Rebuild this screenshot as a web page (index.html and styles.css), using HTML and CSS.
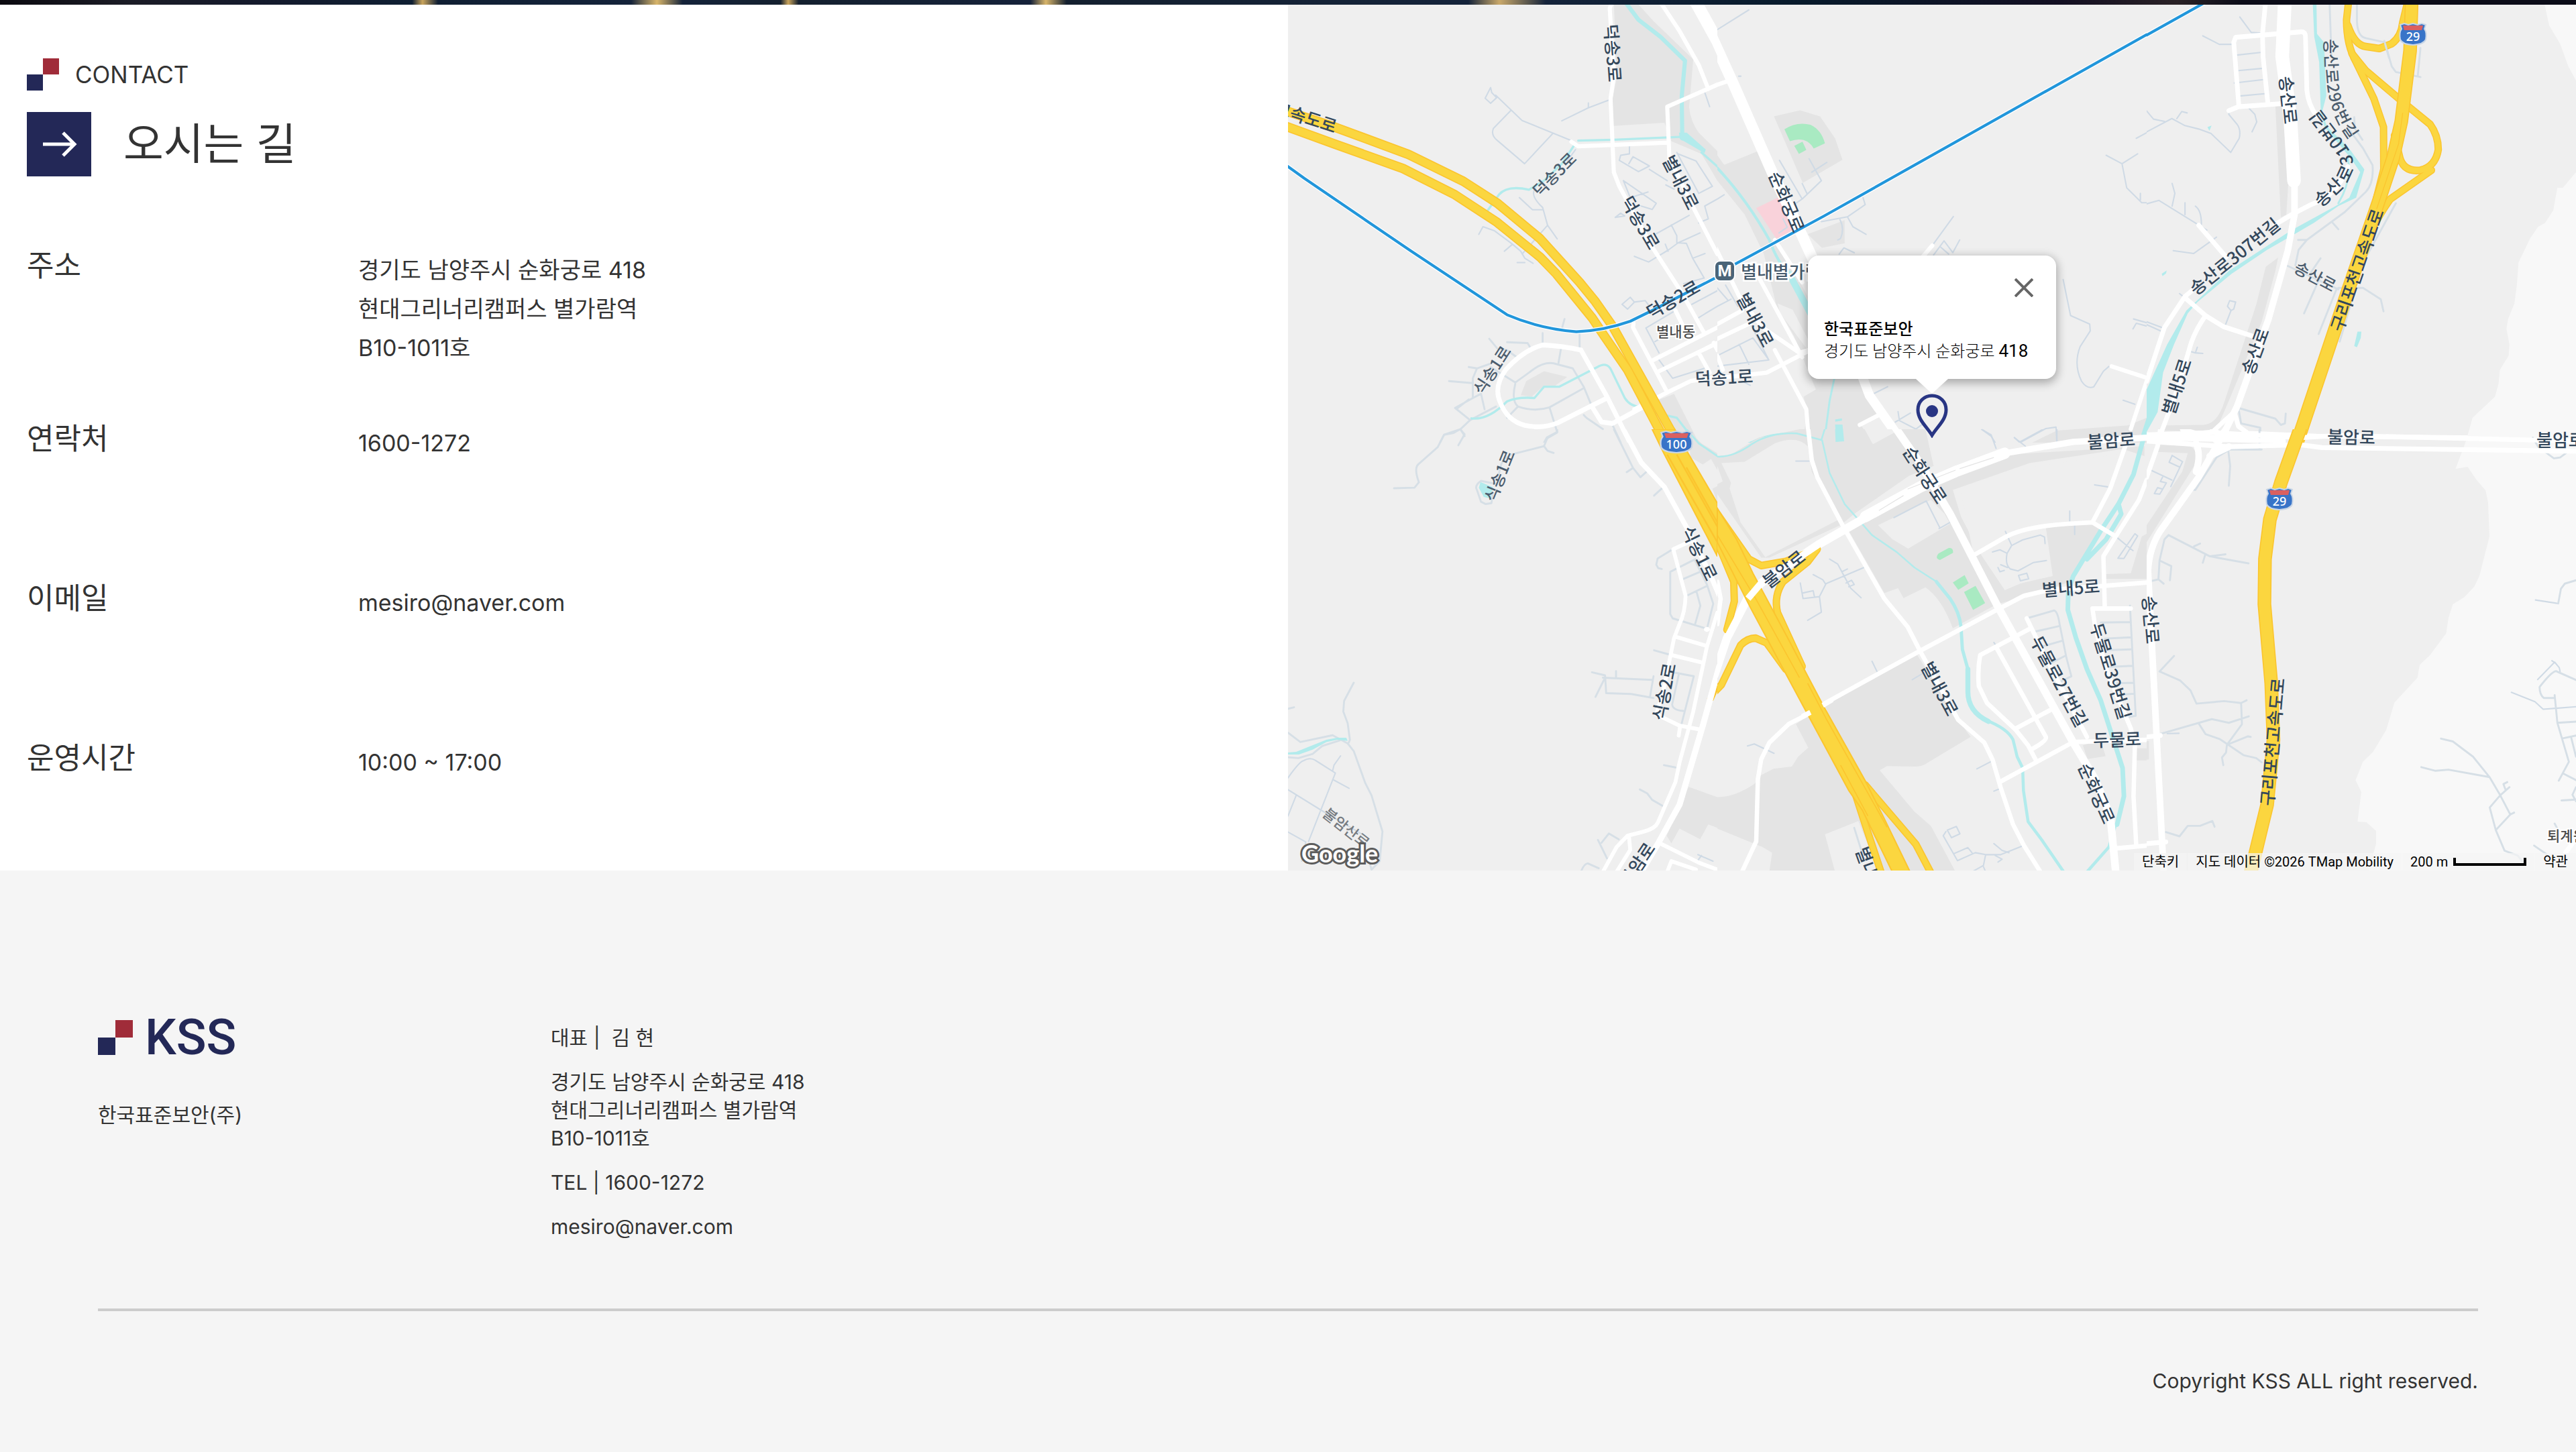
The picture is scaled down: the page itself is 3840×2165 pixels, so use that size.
FILE: index.html
```html
<!DOCTYPE html>
<html lang="ko">
<head>
<meta charset="utf-8">
<title>KSS 한국표준보안 - 오시는 길</title>
<link rel="stylesheet" href="styles.css">
</head>
<body>
<div class="hero-edge"></div>
<main class="contact">
  <section class="info">
    <div class="eyebrow">
      <svg class="mark" viewBox="0 0 48 48" aria-hidden="true"><path fill="#a02c39" d="M24 0h24v24H24z"/><path fill="#232857" d="M0 24h24v24H0z"/></svg>
      <span>CONTACT</span>
    </div>
    <div class="title">
      <span class="arrow"><svg viewBox="0 0 96 96" aria-hidden="true"><path d="M24 48h46M54 31l17 17-17 17" fill="none" stroke="#fff" stroke-width="5"/></svg></span>
      <h1>오시는 길</h1>
    </div>
    <dl class="rows">
      <div class="row"><dt>주소</dt><dd>경기도 남양주시 순화궁로 418<br>현대그리너리캠퍼스 별가람역<br>B10-1011호</dd></div>
      <div class="row"><dt>연락처</dt><dd>1600-1272</dd></div>
      <div class="row"><dt>이메일</dt><dd>mesiro@naver.com</dd></div>
      <div class="row"><dt>운영시간</dt><dd>10:00 ~ 17:00</dd></div>
    </dl>
  </section>

  <section class="map" aria-label="지도">
    <svg class="canvas" viewBox="0 0 1920 1291" preserveAspectRatio="xMidYMid slice">
      <defs>
        <g id="hw-a"><path d="M-40 382L0 395 170 450 440 547 640 642 765 720 920 845 1065 1000 1120 1065 1185 1155 1395 1520 1440 1590"/><path d="M-40 438L0 450 170 510 420 597 610 690 760 785 920 910 980 970 1110 1125 1155 1190 1240 1310 1300 1420 1360 1530 1400 1600"/></g>
        <g id="ramp-c"><path d="M738 0L730 70Q730 160 765 220L830 350 865 450 866 600 840 700"/><path d="M735 90Q760 160 800 165L850 172 895 155Q930 130 935 80L955 0"/><path d="M750 190L800 250 940 365 1035 440Q1065 480 1065 530 1055 590 1000 603 940 610 925 560L905 480"/><path d="M1040 603L890 705Q850 760 830 800"/></g>
        <path id="hw-c" d="M968 0L962 180 930 430 900 560 845 720 735 1030 690 1160 545 1580"/>
        <g id="ramp-e"><path d="M0 400L60 540 62 610 35 710"/><path d="M-20 940L15 905 85 765Q110 740 140 740L180 757 250 850"/><path d="M0 300L115 460 160 483 250 468 340 435"/><path d="M365 425L330 470 240 540Q205 590 220 650L310 840"/><path d="M500 1280L540 1400 605 1590"/><path d="M540 1260L725 1470 790 1590"/></g>
        <path id="hw-e" d="M0 280L70 390 130 510 260 745 390 985 540 1245 610 1380 715 1590H650L530 1350 480 1280 330 1010 230 830 120 630 0 400z"/>
        <path id="hw-f" d="M560 0L490 190 450 320 432 460 430 620 455 900 463 1100 440 1330 375 1590"/>
        <g id="shield"><path d="M-19 -15l6-2 6 2 7-2 7 2 6-2 6 2-2 6q4 6 2 16-3 7-19 8-16-1-19-8-2-10 2-16z" fill="#3874c8" stroke="#c9d6e6" stroke-width="2"/><path d="M-15-14H15l-2 7h-26z" fill="#da6060"/></g>
      </defs>

      <!-- tile 0,0 -->
      <svg class="tile" x="0" y="-7" width="640" height="660" viewBox="0 0 1568 1568" preserveAspectRatio="none">
        <path class="land" d="M1190 0H1265L1335 75 1480 210 1465 380Q1470 430 1500 470L1568 535V640L1510 545 1400 500 1375 435 1188 446 1185 350 1200 280z"/>
        <path class="land" d="M850 1400L870 1350 935 1315 1020 1335 970 1370 930 1370 890 1405zM1345 1420L1410 1395 1500 1568H1440z"/>
        <path class="minor" d="M740 310l-20 38 20 18 22-20-18-18zM758 337L855 427 1040 500M815 390L750 455Q740 480 765 498L864 580 965 475M1000 428L1097 382 1170 355M1097 382V365M1050 530L1020 570M905 665Q880 690 930 735L948 798 983 846M948 798L855 900M930 743H893L845 700M697 830L712 803 755 818 820 865 850 890 865 915 895 933M820 865L790 890M865 930H837M1247 520V545L1215 550 1210 568 1280 608 1320 588 1260 555 1245 580M1320 600L1385 640M1380 655L1410 670M1225 640L1250 700 1315 680M1225 640L1345 720 1330 742 1290 730M1195 770L1215 755 1230 765zM1420 540L1500 685 1550 660 1490 570 1425 545M1568 705L1522 730 1535 775 1500 790M1345 828L1465 763M1265 908L1317 928 1390 885 1425 860 1455 862 1478 915 1520 985M1400 797L1420 835V860M1425 860L1505 825M1378 865L1388 890M1478 915L1523 898M1520 985L1445 1005M1568 1030L1475 1078M1568 1085L1500 1125M1415 1100L1307 1162 1355 1250M1340 1210L1395 1180M1355 1275L1405 1340 1520 1305M1220 1078L1250 1053 1265 1070 1240 1095zM1265 1070L1305 1065 1320 1085M1523 330L1540 378"/>
        <path class="minor wide" d="M588 1350L675 1357M660 1300L690 1305 740 1288M735 1200L765 1235 800 1240 835 1265M800 1212L875 1215 890 1240M1010 1130L1000 1165M930 1215V1180M1065 1235V1185M997 1235L988 1285M690 1305L675 1340V1410L610 1445 665 1488 760 1440M675 1410L705 1395 718 1450M620 1445L660 1415M740 1300L830 1355 880 1320Q930 1280 970 1287L1040 1305 1080 1370 1110 1440M830 1360Q815 1420 840 1440 900 1460 955 1443L1080 1375M840 1440L800 1480M955 1443L983 1530 945 1550 935 1568M665 1488L630 1520 570 1540 555 1568M630 1520L645 1545M1080 1470L1090 1480 1150 1520M1185 1505L1215 1568"/>
        <path class="water" stroke-width="15" d="M1230 5L1280 70 1360 130 1450 215 1438 340 1440 490"/>
        <path class="water" stroke-width="8" d="M1060 498L1190 495 1430 485M1045 515L1000 580 935 640 880 672Q800 655 770 690L730 745M1510 540L1568 590M670 1482Q730 1490 800 1422 840 1405 900 1410L935 1370H990L1130 1300Q1165 1280 1180 1310L1230 1410Q1250 1440 1285 1440M1330 1460L1420 1480 1490 1568"/>
        <path class="water-fill" d="M1428 470h28l70 60-5 12-90-50z"/>
        <path class="road" stroke-width="15" d="M1185 0L1175 30 1190 270 1178 350 1190 610 1210 660 1330 875 1440 1040 1520 1180M1365 15L1430 110 1500 230 1535 315M1568 300L1385 378 1393 560 1470 715 1568 900M1388 505L1060 518 1035 502M1262 1145L1260 1160 1385 1390M1335 1275L1568 1160M1355 1315L1568 1215M1415 1100L1455 1180M1500 1250L1540 1320M1555 1215L1568 1240M1265 1450L1385 1390 1470 1350 1568 1335"/>
        <path class="road" stroke-width="17" d="M1070 1240L1165 1405 1255 1580M1070 1240Q1000 1225 930 1222 860 1240 795 1310 750 1370 775 1425 800 1490 865 1507 930 1520 985 1498L1165 1410M1110 1440L1145 1495 1185 1500 1290 1445"/>
        <path class="road" stroke-width="44" d="M1485 0L1568 145 1600 215"/>
        <use href="#hw-a" class="edge" stroke-width="34"/><use href="#hw-a" class="core" stroke-width="26"/>
        <path class="rail-halo" d="M-10 583L60 632 450 890 800 1115Q920 1165 1053 1175 1150 1172 1250 1138L1330 1100 1600 965"/>
        <path class="rail" d="M-10 583L60 632 450 890 800 1115Q920 1165 1053 1175 1150 1172 1250 1138L1330 1100 1600 965"/>
      </svg>

      <!-- tile 1,0 -->
      <svg class="tile" x="640" y="-7" width="640" height="660" viewBox="0 0 1568 1568" preserveAspectRatio="none">
        <path class="land" d="M207 412L302 391 375 412 430 490 457 566 312 648zM0 550L25 584 155 533 225 690 230 870 330 1050V1180L380 1342H515L560 1420 640 1568H310L330 1460 315 1405 360 1380 330 1310 280 1190 215 1080 170 900 100 760 0 640zM330 830L465 780V862L382 878zM1240 1525L1500 1507 1568 1480V1568H1150z"/>
        <path class="base" d="M220 1075L275 1097 330 1200V1240L230 1110zM520 1500L600 1470 700 1568H570z"/>
        <path d="M142 737L225 698 285 815 215 845z" fill="#f9d2da"/>
        <path d="M245 458Q290 430 340 442 380 460 393 508L352 526Q325 480 265 500zM281 517l30-15 14 29-27 14z" fill="#a9eac2"/>
        <path class="minor" d="M0 105L115 35M78 270h8M227 568L310 705 380 640 335 562M310 650L327 685M345 610L400 575M310 705L280 725M380 785L475 768 540 725 532 700M475 768L495 803 543 830M448 778Q465 810 450 845L440 850M445 900L462 878 500 895M785 870L862 767M790 903L828 853 860 895 885 850M815 875L845 900M225 825L255 805 240 775M0 1020L40 1065M0 1085L50 1060M30 1010L75 1085M0 1260L130 1197 188 1275 0 1297M80 1220L115 1290M125 1155L188 1275M100 1355L120 1365M0 705L25 690M1420 550L1478 580 1535 545M1478 580L1495 665 1550 718H1568M1545 685V710M1530 490L1568 470M1263 990L1290 1118 1360 1148 1362 1172 1325 1228Q1300 1290 1330 1350 1350 1380 1375 1370L1410 1315 1430 1298M1520 1130L1568 1143M1518 1165L1530 1145 1568 1155M1482 1418L1525 1432M570 1395L622 1370M660 1458L665 1490 725 1520 780 1480M650 1495L705 1463M967 1522L1000 1545 1015 1568M1085 1550L1105 1568 1200 1518 1237 1513 1240 1568"/>
        <path class="water" stroke-width="10" d="M0 595Q110 710 190 850 220 930 262 970"/>
        <path class="water" stroke-width="24" d="M262 970L340 1110"/>
        <path class="water" stroke-width="7" d="M427 1342L410 1420 390 1568M0 1590Q80 1590 150 1555 260 1515 390 1560"/>
        <path class="water-fill" d="M430 1504h27l6 60h-28zM430 1486l25-4v8l-24 4zM1568 1480l-20 60 20 10z"/>
        <path class="road" stroke-width="15" d="M0 300L45 285M-10 870L80 1050 165 1160 300 1250 350 1235M210 850L310 1000M150 980L310 1265M0 1148L90 1100M0 1200L120 1145M0 1340L180 1320 230 1295 340 1240M210 1240L325 1450 337 1600M0 1260L20 1310M520 1505L600 1465M785 870L745 915M1440 1298L1568 1338M1568 1350L1510 1520"/>
        <path class="road" stroke-width="40" d="M-20 130L60 300 200 610 310 835 350 920"/>
        <path class="road" stroke-width="34" d="M528 1330L555 1400 700 1600"/>
        <path class="rail-halo" d="M-10 975L390 765 1600 105"/><path class="rail" d="M-10 975L390 765 1600 105"/>
      </svg>

      <!-- tile 2,0 -->
      <svg class="tile" x="1280" y="-7" width="640" height="660" viewBox="0 0 1568 1568" preserveAspectRatio="none">
        <path class="hill" d="M1450 0L1470 90 1510 155 1540 235 1568 285V610L1520 665H1500L1485 745 1455 790 1430 803 1400 845 1358 930 1352 1010 1343 1075 1320 1130 1314 1165 1325 1220 1322 1260 1290 1310 1285 1360 1272 1405 1190 1480 1165 1568H1568V0z"/>
        <path class="land" d="M470 375H495L518 640 510 760 490 770zM435 945L480 912 470 960 420 1140 300 1420 260 1510 225 1530 60 1525 70 1507 210 1505Q260 1500 285 1420L400 1080z"/>
        <path class="minor" d="M205 127L265 157H315M340 60L382 115 420 117M330 195L415 186M335 250L425 242M320 294L425 282M340 340L430 332M0 467L92 420 140 445 190 457 235 473 307 540 338 490Q345 460 330 440L300 405V390M0 393L25 422 65 430M110 420L128 395 148 400M375 385L395 405 402 432 385 467M0 722L45 710 220 815M93 650L103 685 93 730M140 718V760M178 730Q200 745 200 795M97 888L172 898 255 840M0 1140L60 1162M0 1150L50 1172M120 1040L140 1055M288 1150L308 1100 295 1085 303 1065 325 1070 318 1095 308 1100M185 1230L178 1250 205 1252M160 1245L178 1250"/>
        <path class="minor wide" d="M668 10L675 200M768 10V75Q770 130 800 135L870 150 895 235 910 255 1000 273M990 270L1000 170M740 460L790 525 825 585Q830 650 800 680L725 750 585 850 555 885 543 940M758 415L760 455 788 495M680 790L700 812M585 850H553M515 942L700 1025M575 1110L632 985M600 965L635 915M628 1183L693 1025M705 1210L790 930 910 720M700 1020H790L855 1060 865 1103M380 1310L335 1445 345 1500 415 1515V1568M335 1445L470 1483 490 1505 505 1500 508 1465"/>
        <path class="water-fill" d="M606 0H620L622 120 648 150 656 340 640 400 660 450 735 520 795 600 780 650 765 700 700 730 610 790 530 835 440 885 310 970 185 1070 150 1110 100 1220 60 1320 40 1460 0 1530V1380L75 1220 145 1100 300 960 450 865 530 815 690 730 740 700 780 610 745 560 650 450 636 400 630 220 612 130z"/>
        <path class="water" stroke-width="7" d="M735 560Q750 640 700 720"/>
        <path class="water-fill" d="M770 1175h14l-2 22-14 33-10-4zM222 450l15-5-8 18zM55 970l18-12-2 10-13 10z"/>
        <path class="road" stroke-width="17" d="M435 0L423 120 425 200 443 370M300 392L335 378 495 367M337 378L318 150 325 132 560 113Q580 110 580 130L585 320Q590 370 620 410M735 590Q700 690 600 725L530 760 470 795M190 798L290 910M165 1030L140 1050 65 1160 0 1350M140 1055L215 1118 280 1157 385 1190M215 1118Q170 1180 155 1240L105 1400 50 1540M323 1470L335 1510 370 1535 620 1545 1568 1555"/>
        <path class="road" stroke-width="50" d="M505 0L495 200 525 420 538 640"/>
        <path class="road" stroke-width="24" d="M540 620V760L515 890 445 1130 330 1440 290 1520 255 1568"/>
        <path class="road" stroke-width="16" d="M0 1550L240 1530 330 1450M100 1550L500 1550"/>
        <use href="#ramp-c" class="edge" stroke-width="27"/><use href="#ramp-c" class="core" stroke-width="20"/>
        <use href="#hw-c" class="edge" stroke-width="50"/><use href="#hw-c" class="core" stroke-width="42"/>
        <path d="M935 400L920 510 840 740" fill="none" stroke="#fbc52f" stroke-width="3"/>
        <path class="minor wide" d="M868 145L885 205"/>
        <path class="rail-halo" d="M-10 130L220 5"/><path class="rail" d="M-10 130L220 5"/>
      </svg>

      <!-- tile 0,1 -->
      <svg class="tile" x="0" y="633" width="640" height="660" viewBox="0 0 1568 1568" preserveAspectRatio="none">
        <path class="land" d="M1460 0L1510 50 1568 85V145L1545 105 1515 125 1470 100zM1550 210l18-8v58zM1463 1267L1568 1303V1412L1535 1400 1505 1452 1430 1415 1400 1467 1383 1440z"/>
        <path class="minor wide" d="M387 209L462 207 478 188Q460 140 475 125L547 63 570 20 605 13 628 0 645 18 622 57M983 0V12L947 32 935 60 825 87Q780 100 775 140L765 175M935 60L948 77 970 84M765 195L705 183Q680 200 690 215L705 257 722 265 743 262 748 225M1190 0L1260 137 1287 170 1308 152M1237 152L1260 137M1365 210L1337 235M1400 428L1350 458 1345 480 1352 492 1365 495M1488 460L1396 505V655L1405 670 1530 707 1553 618 1530 550 1485 462M1440 532L1505 505M1460 588L1530 555M1492 575L1506 625 1487 690M1337 783L1400 800M1400 860L1482 875 1437 1045M1428 865L1403 975Q1405 995 1443 998M1110 861L1158 872 1162 935 1253 938 1335 952M1150 880L1330 888M1335 875L1322 948M1198 857V880M1123 948L1158 880M1285 1276L1312 1290 1330 1313 1370 1335M1373 1190L1415 1198M1132 1455L1165 1520M1145 1465L1172 1432 1208 1453M1070 1568Q1080 1540 1095 1538L1135 1555M240 898L205 962 202 1000 218 1042 226 1100 222 1110M0 1075L45 1108 163 1084 218 1113 240 1140 282 1253 305 1297 345 1425 335 1530 305 1560 298 1535M0 1162L38 1165 90 1150 125 1122 190 1102M0 990L22 985"/>
        <path class="minor" d="M0 1235Q40 1180 55 1175 80 1160 100 1173L173 1218 75 1460M163 1210L168 1190 192 1157M168 1243L223 1272M0 1277L122 1350 280 1440M30 1297L0 1370M0 1427L65 1462 50 1530M1497 1507L1552 1530M1510 1510L1495 1530"/>
        <path class="water-fill" d="M703 187L748 205 740 245 715 240 697 207zM0 1145L30 1143 140 1100 180 1093H213L218 1104 180 1100 140 1108 90 1135 40 1152 0 1152z"/>
        <path class="water" stroke-width="7" d="M1455 0L1500 50 1568 95"/>
        <path class="road" stroke-width="18" d="M1225 0L1290 118 1375 205 1460 355 1540 510 1575 590"/>
        <path class="road" stroke-width="14" d="M1475 395L1407 425 1452 590Q1450 650 1430 690L1410 740 1370 930 1345 1010 1430 1050 1500 1063M1415 735L1530 768M1400 800L1515 827M1427 1085L1432 1052M1568 650L1530 770 1480 1000 1430 1180 1415 1250 1350 1395Q1340 1415 1300 1425L1240 1440 1200 1480 1150 1568M1245 1440L1250 1490 1200 1568M1365 1470L1500 1535 1568 1560M1385 1568L1400 1530 1490 1560"/>
        <path d="M1530 955L1568 905V930L1553 962z" fill="#fbc52f"/>
        <path class="road" stroke-width="22" d="M1575 840L1515 1050 1430 1330 1350 1470 1290 1568"/>
        <ellipse cx="1530" cy="709" rx="11" ry="9" fill="#fff"/>
        <path d="M1330 0H1410L1568 262V450L1370 80z" fill="#fbd63f" stroke="#fbc52f" stroke-width="5"/>
        <path d="M1385 90L1568 400M1420 90L1568 345M1455 135L1568 330" fill="none" stroke="#fbc52f" stroke-width="6"/>
      </svg>

      <!-- tile 1,1 -->
      <svg class="tile" x="640" y="633" width="640" height="660" viewBox="0 0 1568 1568" preserveAspectRatio="none">
        <path class="land" d="M320 0H760L790 130 700 165 500 300 450 340 190 455 160 455 0 230V95L50 90 150 30 300 0zM520 340L790 190 1060 90 1560 60V95L1480 70 1140 120 860 215 890 310 960 440 1050 570 1110 545 1225 520 1200 350 1365 330 1400 350 1320 480 1290 540 1100 600 1020 620 860 705Q820 600 760 560L680 598 660 563 610 580 480 360zM590 870L730 800 880 1030 925 1090 770 1180Q750 1195 720 1195L620 1193 593 1208 720 1355 780 1405 870 1568H410L393 1435 515 1390 395 980zM287 1045L340 1010 490 1290 560 1568H190L200 1500 165 1480 0 1415V1303Q60 1305 135 1257L160 1225 205 1203 272 1195 295 1160 332 1128zM1335 1120L1400 1100 1418 1158 1352 1168zM1530 1130h38v43h-38zM1420 513L1510 510 1550 380 1568 370V530H1420z"/>
        <path class="base" d="M15 120L100 115 210 50Q290 20 330 60L345 150 440 322 175 453 85 330 45 210 50 190zM0 130L20 185 0 195zM538 0H640L650 10 568 53zM587 340L780 250 830 300 850 335 697 423 640 390zM890 225L1140 135 1480 85 1430 210 1360 325 1180 340 1050 380 935 440zM975 440L1050 395 1200 355 1220 520 1110 545 1050 560zM393 1435L515 1388 590 1568H430z"/>
        <path d="M808 440l36-19q18-3 17 17l-48 25q-20-5-5-23zM860 543L903 517 918 546 880 569zM901 577L943 555 978 616 934 640z" fill="#a9eac2"/>
        <path class="minor" d="M287 113H335M645 313L763 254 813 350M810 352L850 330M410 460L440 478 463 520 487 563 525 597M535 490L397 547 373 593 380 648 330 677M455 505L475 495M470 545L490 535 500 550 480 558M350 515L385 533 395 548M303 545L313 600 373 593M313 580L350 572 355 595M565 822L583 858M712 887L750 865M110 1122L135 1115 207 1148M1378 197L1425 204M1287 290V325M1305 340V373M1052 362L1075 412 1058 440Q1050 480 1070 495L1098 502 1155 472 1202 465M1075 412L1115 392 1180 375 1195 382 1197 405M1005 435L1032 427 1055 438M1025 490L1032 505 1048 500M1035 480L1060 490M1100 518L1130 510 1137 530 1107 537zM1455 380L1518 430M1525 370L1535 378 1485 458 1463 457zM965 0L1000 20 1018 68M1085 30L1125 60M1105 45L1190 0M1240 0V42M1010 755L1020 770M948 1203L1000 1177M1010 1282L1035 1272M840 1420L873 1407 886 1433 855 1447zM835 1425L825 1440 877 1528 942 1500 980 1507H1035L1112 1477M865 1503L915 1482 930 1500M980 1507L972 1545 930 1568M972 1550L980 1568M1010 1468L1040 1492 1065 1500M1015 1510L1040 1523 1025 1533"/>
        <path class="minor wide" d="M500 1412L535 1520M1130 670L1230 642Q1243 645 1250 690L1275 810 1293 875 1240 900M1160 717L1250 697M1185 770L1258 750M1215 830L1270 803M1400 685L1508 683M1415 742L1510 737M1420 783L1510 780M1430 842L1515 838M1460 900L1520 898M1470 940L1522 937M1507 625L1528 1015 1500 1020"/>
        <path class="water" stroke-width="6" d="M0 97Q60 100 130 50 200 10 290 15L380 38 392 0M383 40L410 155 465 265 565 375 655 435 720 490 800 540"/>
        <path class="water" stroke-width="12" d="M800 540L850 600Q885 650 890 700L895 780 915 850"/>
        <path class="water" stroke-width="18" d="M915 850V930Q915 1000 990 1035"/>
        <path class="water" stroke-width="11" d="M980 1030Q1060 1060 1080 1100L1095 1160 1115 1200 1118 1280 1135 1390 1185 1455 1265 1568M1455 1400L1430 1480 1350 1568"/>
        <path class="water" stroke-width="17" d="M1560 20L1520 160 1465 265 1400 360 1350 440 1300 520 1282 570 1280 640 1310 740 1350 850 1400 960 1440 1080 1480 1200 1485 1300 1460 1400M1465 265L1475 300 1420 390 1350 460"/>
        <path class="water-fill" d="M430 0h29l4 43-31 2z"/>
        <path class="road" stroke-width="16" d="M332 0L345 110 365 170 460 345 610 600 695 700 740 785M740 785L880 1030 975 1110 1005 1170 1035 1270 1080 1400 1120 1475 1180 1568M385 975L740 785 1020 640 1120 590 1210 570 1568 543M340 1005L260 1045 190 1110 160 1170 148 1240 142 1460 90 1568M930 450L1050 383Q1120 345 1280 335L1370 330 1455 380M1490 60L1435 210 1370 330M1568 180L1540 250 1455 380 1410 450 1415 630M1370 635H1510M1370 635L1380 700 1420 850 1510 1060 1525 1120 1520 1300 1530 1475M1130 670L1150 710 1200 810 1350 1090M1145 705L960 800Q950 850 955 910L985 970 1090 1065 1135 1120 1165 1175M1020 775L1200 1090Q1205 1105 1145 1135M1090 1060L1225 990M1035 1248L1300 1108 1568 1100M1450 1485L1568 1475M0 540L12 600 0 690"/>
        <path class="road" stroke-width="28" d="M640 -20L740 120 850 300 1020 620 1100 760 1300 1110 1380 1240 1435 1370 1455 1568"/>
        <path class="road" stroke-width="30" d="M-10 870L35 740 110 600 160 545 370 408 520 325 740 200 870 145 1040 90"/>
        <path class="road" stroke-width="40" d="M540 310L740 205 870 150 1050 85"/>
        <path class="road" stroke-width="22" d="M1020 90L1300 45 1568 30"/>
        <path d="M590 288L680 235M695 212L870 145M885 140L1010 100" fill="none" stroke="#e4e4e4" stroke-width="3"/>
        <use href="#ramp-e" class="edge" stroke-width="27"/><use href="#ramp-e" class="core" stroke-width="19"/>
        <use href="#hw-e" fill="#fbd63f" stroke="#fbc52f" stroke-width="5"/>
        <path d="M0 375L140 600 300 880M330 900L400 1030 620 1410M450 1190L550 1370" fill="none" stroke="#fbc52f" stroke-width="4"/>
        <path class="road butt" stroke-width="24" d="M112 600L160 545 370 408M-10 870L35 740 75 665"/>
        <path class="road butt" stroke-width="18" d="M385 978L420 958M310 1018L340 1003"/>
      </svg>

      <!-- tile 2,1 -->
      <svg class="tile" x="1280" y="633" width="640" height="660" viewBox="0 0 1568 1568" preserveAspectRatio="none">
        <path class="hill" d="M1180 0L1165 45 1128 140 1172 133 1205 180 1238 217 1247 260 1252 380 1215 520 1197 557 1160 595 1118 620 1102 670 1094 723 1035 800 997 835 989 880 905 968 875 1065 827 1143 790 1178 763 1243 784 1285 770 1390 803 1392 838 1423V1468L810 1568H1568V0z"/>
        <path class="land" d="M40 55L160 60Q190 80 180 120L0 400V340L130 150 150 85 40 80zM0 1105h8v65H0z"/>
        <path class="minor" d="M93 93L131 115 88 203M93 93L82 117 118 133M15 145L92 180M58 170L50 185 72 190 48 230 28 228 40 207 58 212M1332 932L1418 965 1448 992 1568 983M1428 887L1490 825 1507 845 1510 858M1480 820L1495 830M1420 605L1500 617M75 1078L118 1077"/>
        <path class="minor wide" d="M160 213L178 215 255 100 298 75 305 130 300 200M298 72H420M412 0V70M1410 30L1430 62 1487 103 1510 100 1535 82 1568 80M15 538L43 532 62 547M43 532L47 465 65 390 80 375 230 450 372 475M173 415L195 405M205 473L213 447M230 450L288 443M47 465L90 485 85 535M100 803L47 858 122 890 160 925 182 972 283 963 345 970 348 1045 293 1118 290 1145 275 1163 280 1190M345 970L365 960M47 1080L238 1027 300 1040 373 1017M190 1042L215 1080 268 1098 355 1155 400 1165 420 1180M293 1118L370 1088 380 1090M70 1427L120 1442 150 1405 195 1405 240 1388 248 1408M1503 617L1513 565 1527 547 1568 535M1075 1096L1118 1106 1192 1160 1252 1232 1292 1298 1328 1365 1275 1420 1307 1493 1355 1510 1380 1540M1003 1197L1055 1210 1102 1206 1250 1232M1275 1420L1253 1340 1290 1298 1325 1268M1310 1275L1303 1257 1317 1250M1328 1365L1342 1358M1568 888L1495 857Q1480 857 1435 913 1435 940 1450 952H1490M1490 942L1500 1040 1542 1178 1505 1245M1500 1040L1568 1036M1520 1095L1568 1085M1550 1090L1568 1160M1522 1220L1568 1243M1515 1315L1568 1312M1568 1268L1555 1295 1568 1318M1415 1475L1460 1505M1490 1397L1500 1415"/>
        <path class="road" stroke-width="17" d="M0 20L240 12 560 30 700 22 1568 42M0 42L300 62 560 55 640 65 1568 78M0 30L500 42M240 0L300 35M50 0L40 60 0 170M130 0L270 40M0 1090L50 1085M0 1468L70 1462M1568 1450L1530 1500"/>
        <path class="road" stroke-width="24" d="M290 0L190 170 50 360Q10 420 5 500L20 780 62 1568M180 50Q200 90 180 150M300 62L230 95"/>
        <use href="#hw-f" class="edge" stroke-width="50"/><use href="#hw-f" class="core" stroke-width="42"/>
      </svg>

      <g class="labels">
        <path id="curve-296" d="M1557 50Q1556 120 1566 148T1592 196" fill="none" stroke="none"/>
        <path id="curve-310" d="M1526 300L1564 264Q1588 240 1564 212L1522 156" fill="none" stroke="none"/>
        <text transform="translate(27 166) rotate(18)">고속도로</text>
        <text transform="translate(486 72) rotate(86)">덕송3로</text>
        <text class="small" transform="translate(396 252) rotate(-45)">덕송3로</text>
        <text transform="translate(587 264) rotate(63)">별내3로</text>
        <text transform="translate(527 324) rotate(60)">덕송3로</text>
        <text transform="translate(573 438) rotate(-30)">덕송2로</text>
        <text class="place" x="578" y="486">별내동</text>
        <text class="small" transform="translate(303 544) rotate(-57)">식송1로</text>
        <text transform="translate(650 554) rotate(-3)">덕송1로</text>
        <text transform="translate(745 293) rotate(67)">순화궁로</text>
        <text class="station" x="675" y="396">별내별가람역</text>
        <text transform="translate(698 469) rotate(62)">별내3로</text>
        <text transform="translate(1227 648) rotate(-4)">불암로</text>
        <text transform="translate(1493 142) rotate(84)">송산로</text>
        <text class="small"><textPath href="#curve-296" startOffset="50%">송산로296번길</textPath></text>
        <text><textPath href="#curve-310" startOffset="50%">송산로310번길</textPath></text>
        <text transform="translate(1410 374) rotate(-39)">송산로307번길</text>
        <text class="small" transform="translate(1532 404) rotate(28)">송산로</text>
        <text transform="translate(1592 395) rotate(-71)">구리포천고속도로</text>
        <text transform="translate(1440 516) rotate(-70)">송산로</text>
        <text transform="translate(1323 569) rotate(-72)">별내5로</text>
        <text transform="translate(1585 643) rotate(1)">불암로</text>
        <text class="start" x="1861" y="647">불암로</text>
        <text class="small" transform="translate(314 702) rotate(-68)">식송1로</text>
        <text transform="translate(615 817) rotate(64)">식송1로</text>
        <text transform="translate(559 1024) rotate(-79)">식송2로</text>
        <text class="trail" transform="translate(88 1226) rotate(38)">불암산로</text>
        <text transform="translate(519 1281) rotate(-56)">불암로</text>
        <text transform="translate(951 700) rotate(57)">순화궁로</text>
        <text transform="translate(738 840) rotate(-38)">불암로</text>
        <text transform="translate(1167 868) rotate(-4)">별내5로</text>
        <text transform="translate(973 1019) rotate(62)">별내3로</text>
        <text transform="translate(1151 1008) rotate(62)">두물로27번길</text>
        <text transform="translate(1228 993) rotate(73)">두물로39번길</text>
        <text transform="translate(1236 1094) rotate(-2)">두물로</text>
        <text transform="translate(1207 1175) rotate(66)">순화궁로</text>
        <text class="start" transform="translate(856 1256) rotate(70)">별내3로</text>
        <text transform="translate(1288 917) rotate(85)">송산로</text>
        <text transform="translate(1466 1099) rotate(-85)">구리포천고속도로</text>
        <text class="place start" x="1877" y="1238">퇴계원</text>
      </g>
      <g class="shields">
        <g transform="translate(579 653)"><use href="#shield" transform="scale(1.2 1)"/><text y="2">100</text></g>
        <g transform="translate(1677 45)"><use href="#shield"/><text y="2">29</text></g>
        <g transform="translate(1478 738)"><use href="#shield"/><text y="2">29</text></g>
      </g>
      <g transform="translate(651 397)"><rect x="-15" y="-15" width="30" height="30" rx="8" fill="#4a6478" stroke="#fff" stroke-width="2"/><text class="metro">M</text></g>
      <text class="google" x="20" y="1265">Google</text>
    </svg>

    <svg class="pin" viewBox="0 0 48 66" aria-hidden="true"><path d="M24 3C12 3 3 12 3 24c0 15 13 25 21 38 8-13 21-23 21-38C45 12 36 3 24 3z" fill="#efefef" stroke="#283583" stroke-width="5"/><circle cx="24" cy="26" r="9" fill="#283583"/></svg>
    <div class="popup">
      <button class="close" type="button" aria-label="닫기"><svg viewBox="0 0 28 28"><path d="M1 1l26 26M27 1L1 27" stroke="#666" stroke-width="4"/></svg></button>
      <strong>한국표준보안</strong>
      <p>경기도 남양주시 순화궁로 <span>418</span></p>
    </div>
    <div class="credits">
      <button type="button">단축키</button>
      <span>지도 데이터 ©2026 TMap Mobility</span>
      <span class="scale">200 m<i></i></span>
      <a href="#">약관</a>
    </div>
  </section>
</main>

<footer class="footer">
  <div class="columns">
    <div class="brand">
      <div class="logo">
        <svg viewBox="0 0 52 52" aria-hidden="true"><path fill="#a02c39" d="M26 0h26v26H26z"/><path fill="#232857" d="M0 26h26v26H0z"/></svg>
        <span>KSS</span>
      </div>
      <p>한국표준보안(주)</p>
    </div>
    <address class="details">
      <p>대표 |&nbsp; 김 현</p>
      <p>경기도 남양주시 순화궁로 418<br>현대그리너리캠퍼스 별가람역<br>B10-1011호</p>
      <p>TEL | 1600-1272</p>
      <p>mesiro@naver.com</p>
    </address>
  </div>
  <p class="copyright">Copyright KSS ALL right reserved.</p>
</footer>
</body>
</html>
```
FILE: styles.css
```css
* { box-sizing: border-box; margin: 0; padding: 0; }

body {
  font-family: Inter, "Noto Sans CJK KR", sans-serif;
  color: #333;
  background: #f5f5f5;
}

.hero-edge {
  height: 7px;
  background: linear-gradient(90deg,
    #0b0a10 0%, #1b1c26 5%, #141a2c 10%, #0f1f33 16%, #c9a45c 16.4%, #101f33 17%,
    #14233a 24.5%, #d8b56a 25.5%, #14233a 26.5%, #14202f 30.3%, #c9a45c 30.6%, #14202f 31%,
    #15223a 40%, #d8b56a 40.6%, #14202f 41.4%, #14233a 57%, #c9a86a 58.2%, #14233a 60%,
    #071a2b 70%, #130f22 80%, #2a2226 84.5%, #0b0c18 87%, #0b0c18 100%);
}

.contact {
  display: grid;
  grid-template-columns: 1fr 1fr;
  background: #fff;
}

.info { padding: 80px 40px 36px; }

.eyebrow {
  display: flex;
  align-items: center;
  gap: 24px;
  font-size: 35px;
  line-height: 48px;
}
.mark { width: 48px; height: 48px; }

.title {
  display: flex;
  align-items: center;
  gap: 48px;
  margin-top: 32px;
}
.arrow { width: 96px; height: 96px; background: #232857; }
.arrow svg { display: block; }
.title h1 { font-size: 65px; line-height: 96px; font-weight: 400; }

.rows {
  display: flex;
  flex-direction: column;
  gap: 76px;
  margin-top: 103px;
}
.row {
  display: grid;
  grid-template-columns: 494px 1fr;
  min-height: 162px;
}
.row dt { font-size: 44px; line-height: 60px; }
.row dd { font-size: 34px; line-height: 58px; padding-top: 8px; }

.map {
  position: relative;
  overflow: hidden;
  background: #efefef;
  font-family: Roboto, "Noto Sans CJK KR", sans-serif;
}
.canvas { position: absolute; inset: 0; width: 100%; height: 100%; }

.land { fill: #e4e4e4; }
.base { fill: #efefef; }
.hill { fill: #f8f8f8; }
.minor, .water, .road, .edge, .core, .rail, .rail-halo {
  fill: none;
  stroke-linecap: round;
  stroke-linejoin: round;
}
.minor { stroke: #cfdae5; stroke-width: 5px; }
.minor.wide { stroke: #d6dfe6; stroke-width: 7px; }
.water { stroke: #b2ebec; }
.water-fill { fill: #b2ebec; }
.road { stroke: #fff; }
.road.butt { stroke-linecap: butt; }
.edge { stroke: #fbc52f; }
.core { stroke: #fbd63f; }
.rail-halo { stroke: #fff; stroke-width: 16px; }
.rail { stroke: #2196db; stroke-width: 10px; }

.labels text {
  font-family: "Noto Sans CJK KR", sans-serif;
  font-size: 26px;
  font-weight: 500;
  fill: #33475b;
  text-anchor: middle;
  dominant-baseline: central;
}
.labels .small { font-size: 24px; fill: #4b5c6d; }
.labels .place { font-size: 21px; fill: #4a4a4a; stroke: #fff; stroke-width: 4px; paint-order: stroke; }
.labels .trail { font-size: 22px; fill: #757a80; }
.labels .station { fill: #45596b; stroke: #fff; stroke-width: 5px; paint-order: stroke; text-anchor: start; }
.labels .start { text-anchor: start; }
.shields text {
  font-family: "Noto Sans", sans-serif;
  font-size: 18px;
  font-weight: 500;
  fill: #fff;
  text-anchor: middle;
  dominant-baseline: central;
}
.metro {
  font-size: 24px;
  font-weight: 700;
  fill: #fff;
  text-anchor: middle;
  dominant-baseline: central;
}
.google {
  font-family: Lato, sans-serif;
  font-size: 36px;
  font-weight: 700;
  fill: #fff;
  stroke: #5c5c5c;
  stroke-width: 6px;
  paint-order: stroke;
  dominant-baseline: central;
}

.pin {
  position: absolute;
  left: 50%;
  bottom: 50%;
  width: 48px;
  height: 66px;
  margin-left: -24px;
}

.popup {
  position: absolute;
  left: 50%;
  bottom: calc(50% + 88px);
  width: 370px;
  height: 184px;
  margin-left: -185px;
  padding: 94px 24px 0;
  background: #fff;
  border-radius: 16px;
  box-shadow: 0 4px 14px 2px rgba(0, 0, 0, .3);
  color: #000;
  font-size: 24px;
  line-height: 32px;
}
.popup::after {
  content: "";
  position: absolute;
  left: 50%;
  top: 100%;
  margin-left: -24px;
  border: 24px solid transparent;
  border-top: 22px solid #fff;
  border-bottom: 0;
}
.popup strong { display: block; font-weight: 500; }
.popup p { font-weight: 300; white-space: nowrap; }
.popup p span { font-size: 26px; font-weight: 400; }
.close {
  position: absolute;
  right: 34px;
  top: 34px;
  width: 28px;
  height: 28px;
  border: 0;
  background: none;
}
.close svg { display: block; }

.credits {
  position: absolute;
  right: 0;
  bottom: 0;
  display: flex;
  gap: 1px;
  font-size: 20px;
  line-height: 26px;
  color: #000;
}
.credits > * {
  padding: 0 12px;
  border: 0;
  background: rgba(245, 245, 245, .7);
  font: inherit;
  color: inherit;
  text-decoration: none;
}
.scale { display: flex; align-items: center; gap: 8px; }
.scale i {
  width: 109px;
  height: 12px;
  border: 4px solid #000;
  border-top: 0;
}

.footer { padding: 222px 146px 84px; }
.columns {
  display: grid;
  grid-template-columns: 675px 1fr;
  padding-bottom: 101px;
  border-bottom: 4px solid #ccc;
  font-size: 30px;
  line-height: 42px;
}
.logo { display: flex; align-items: center; gap: 18px; height: 54px; }
.logo svg { width: 52px; height: 52px; }
.logo span {
  font-family: Roboto, sans-serif;
  font-size: 74px;
  font-weight: 500;
  line-height: 54px;
  color: #232857;
}
.brand p { margin-top: 67px; }
.details {
  display: flex;
  flex-direction: column;
  gap: 24px;
  padding-top: 6px;
  font-style: normal;
}
.copyright {
  margin-top: 82px;
  font-size: 30px;
  line-height: 44px;
  text-align: right;
}
```
